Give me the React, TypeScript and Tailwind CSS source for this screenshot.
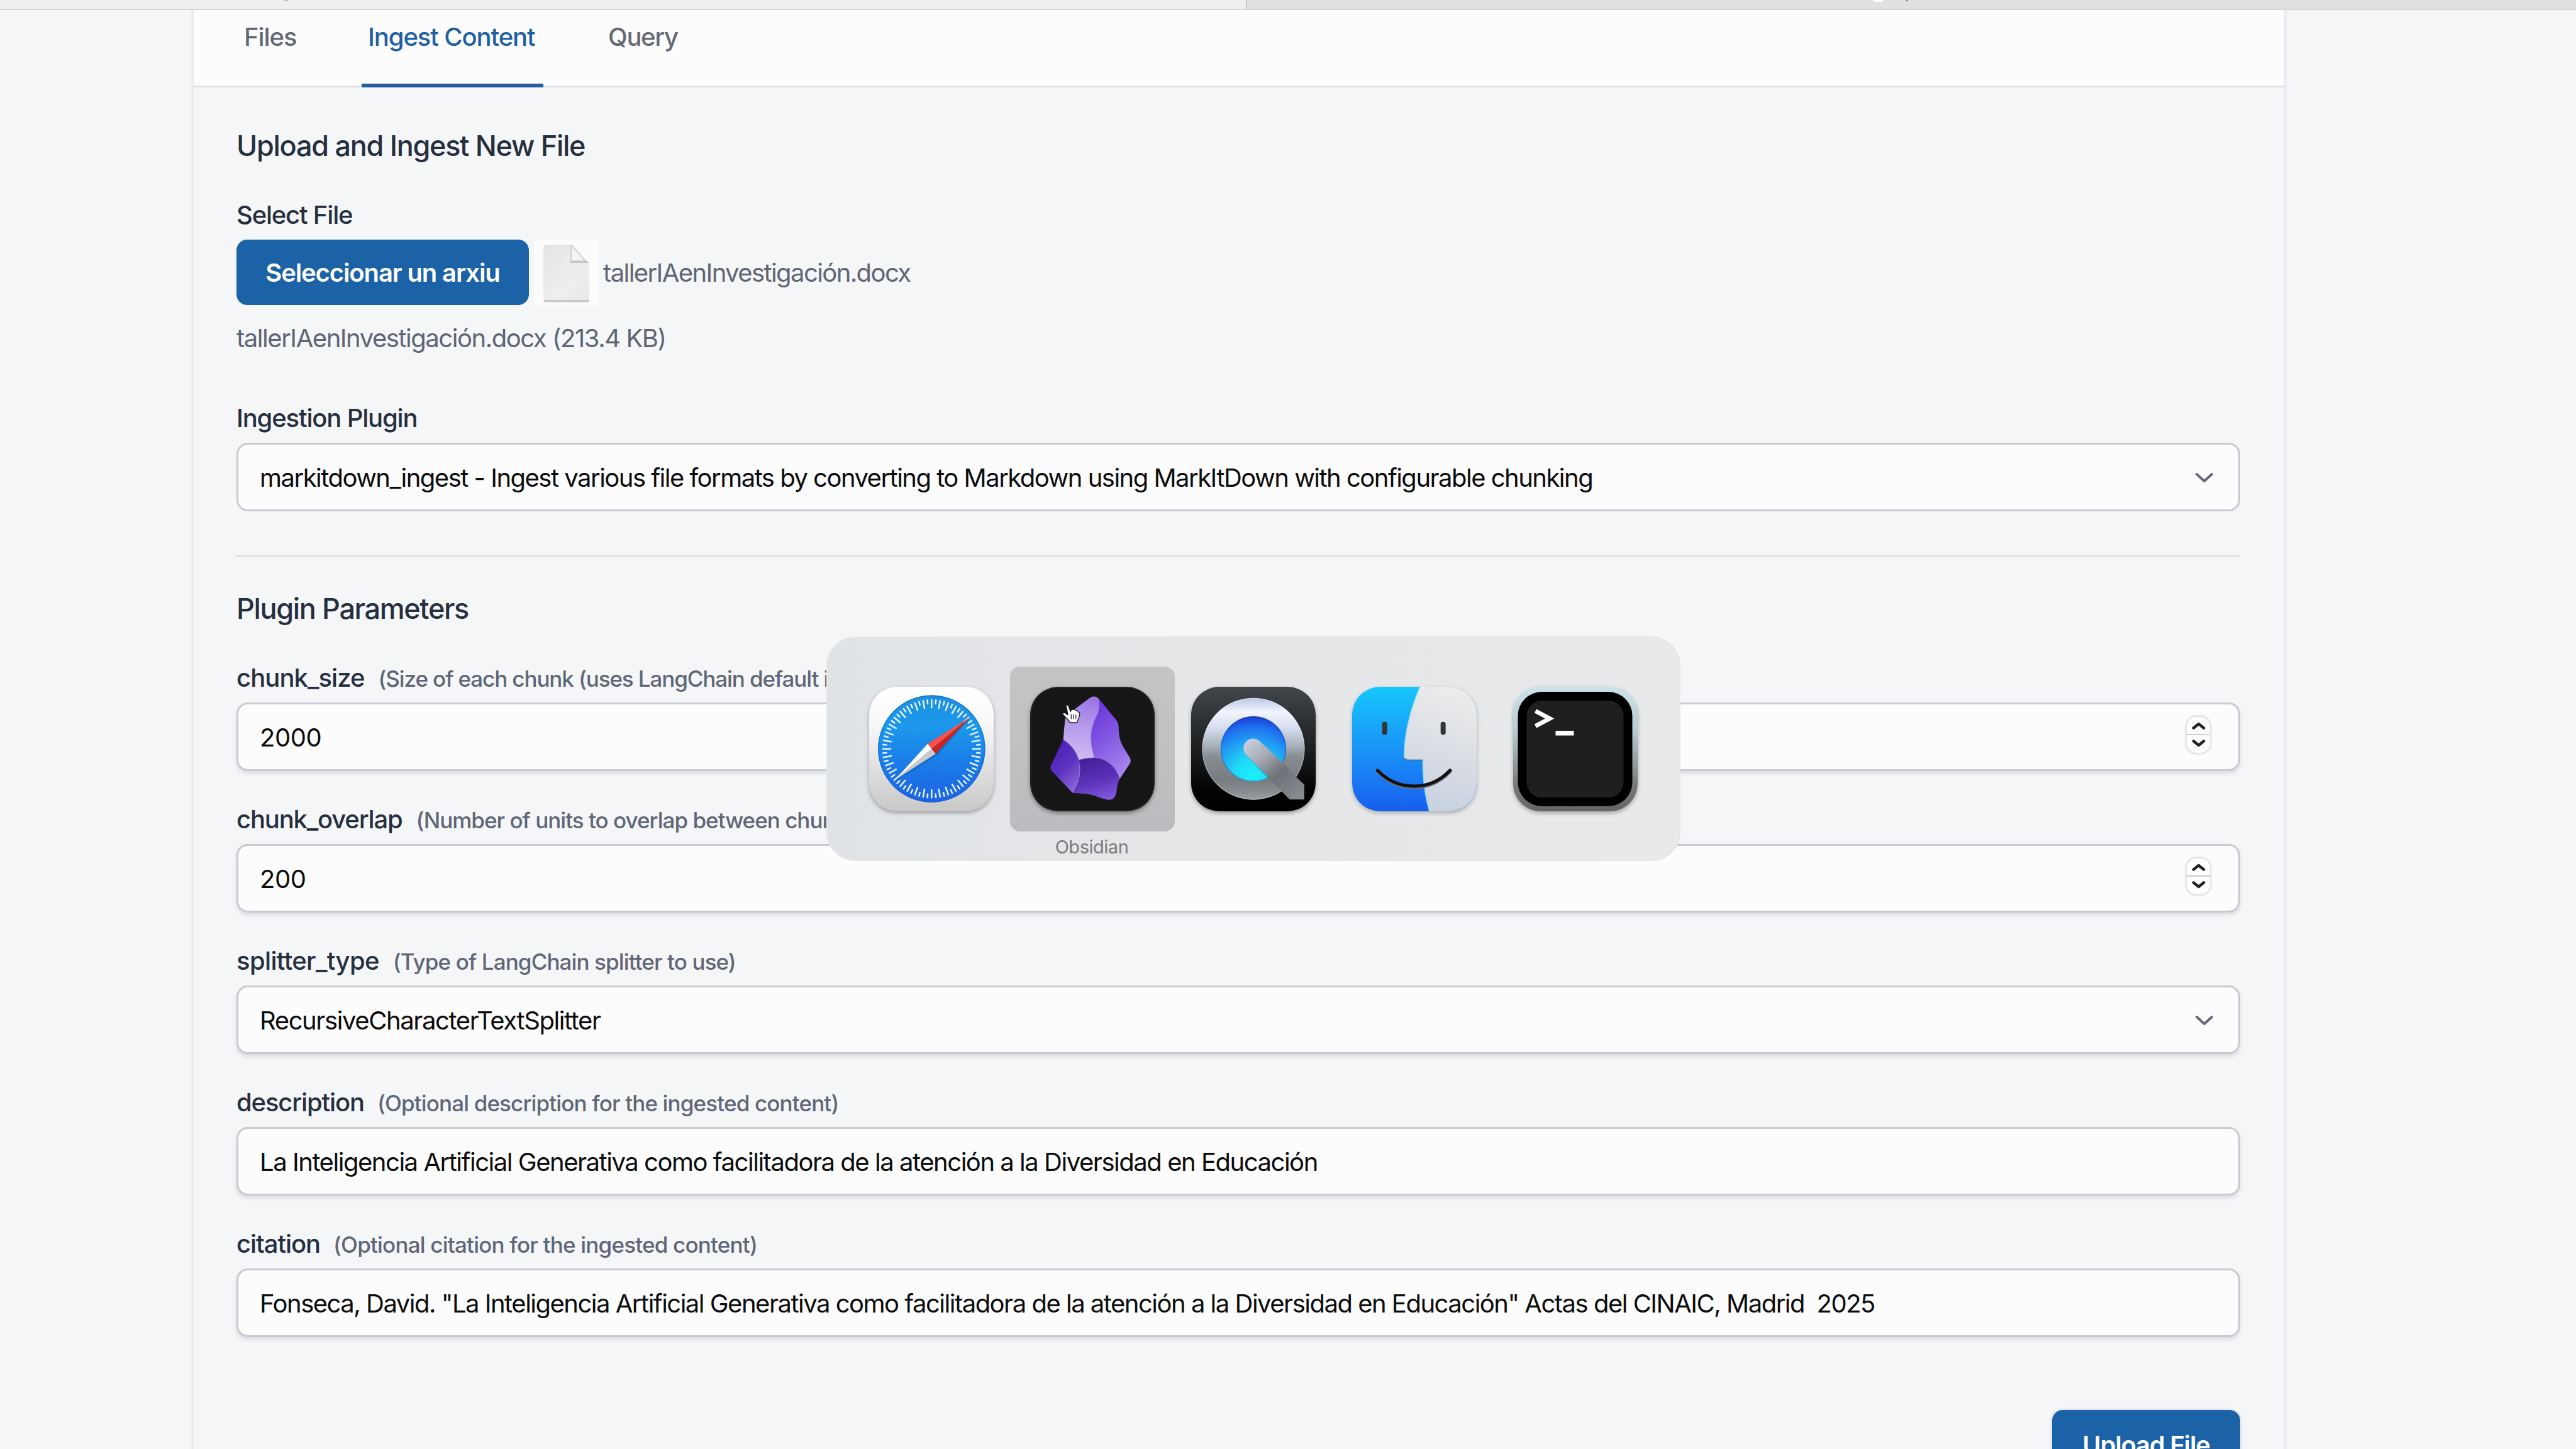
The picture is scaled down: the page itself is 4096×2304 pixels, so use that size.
import type { ReactNode } from "react";

function SafariIcon() {
  const ticks = Array.from({ length: 72 }, (_, i) => i);
  return (
    <svg viewBox="0 0 594 594" className="size-[198px] overflow-visible drop-shadow-[0_3px_3px_rgba(0,0,0,0.3)]">
      <defs>
        <linearGradient id="sf-bg" x1="0" y1="0" x2="0" y2="1">
          <stop offset="0" stopColor="#ffffff" />
          <stop offset="0.3" stopColor="#f8f8f8" />
          <stop offset="1" stopColor="#c8c8c8" />
        </linearGradient>
        <linearGradient id="sf-dial" x1="0" y1="0" x2="0" y2="1">
          <stop offset="0" stopColor="#1d8fe0" />
          <stop offset="0.3" stopColor="#1c98ec" />
          <stop offset="0.65" stopColor="#1b7be8" />
          <stop offset="1" stopColor="#1e62e4" />
        </linearGradient>
      </defs>
      <rect width="594" height="594" rx="134" fill="url(#sf-bg)" />
      <circle cx="298" cy="296" r="256" fill="url(#sf-dial)" />
      <circle cx="298" cy="296" r="253" fill="none" stroke="#1263b8" strokeOpacity="0.45" strokeWidth="5" />
      <g stroke="#e4f3ff" strokeWidth="7.5" strokeLinecap="round">
        {ticks.map((i) => (
          <line key={i} x1="298" y1="63" x2="298" y2={i % 2 === 0 ? 100 : 80} transform={`rotate(${i * 5} 298 296)`} />
        ))}
      </g>
      <path d="M483 148 L324 328 L121 452 Z" fill="#0b3f8f" opacity="0.35" />
      <path d="M483 144 L279 272 L298 296 Z" fill="#fb5147" />
      <path d="M483 144 L298 296 L317 320 Z" fill="#c9251f" />
      <path d="M121 446 L279 272 L298 296 Z" fill="#ffffff" />
      <path d="M121 446 L298 296 L317 320 Z" fill="#c9cacb" />
    </svg>
  );
}

function ObsidianIcon() {
  return (
    <svg viewBox="805 36 594 594" className="size-[198px] overflow-visible drop-shadow-[0_3px_3px_rgba(0,0,0,0.4)]">
      <defs>
        <linearGradient id="ob-light" x1="0.6" y1="0" x2="0.5" y2="1">
          <stop offset="0" stopColor="#9a74e6" />
          <stop offset="0.5" stopColor="#b69cec" />
          <stop offset="1" stopColor="#cfbcf4" />
        </linearGradient>
        <linearGradient id="ob-right" x1="0.3" y1="0" x2="0.7" y2="1">
          <stop offset="0" stopColor="#6a36dc" />
          <stop offset="0.45" stopColor="#8256e2" />
          <stop offset="1" stopColor="#a888ee" />
        </linearGradient>
        <linearGradient id="ob-bottom" x1="0.4" y1="0" x2="0.7" y2="1">
          <stop offset="0" stopColor="#43209a" />
          <stop offset="0.5" stopColor="#5a30b8" />
          <stop offset="1" stopColor="#8258dc" />
        </linearGradient>
        <linearGradient id="ob-left" x1="0.3" y1="0" x2="0.8" y2="1">
          <stop offset="0" stopColor="#4c1cb8" />
          <stop offset="0.5" stopColor="#5d33c0" />
          <stop offset="1" stopColor="#9068dc" />
        </linearGradient>
      </defs>
      <rect x="805" y="36" width="594" height="594" rx="134" fill="#161616" />
      <rect x="808" y="39" width="588" height="588" rx="131" fill="none" stroke="#303030" strokeWidth="3" />
      <path d="M1085 92 Q1108 72 1130 90 Q1142 110 1130 160 C1090 230 1085 290 1112 374 Q1070 375 1037 385 Q1020 325 963 288 L971 195 Q972 180 985 167 Z" fill="url(#ob-light)" />
      <path d="M1130 90 L1218 198 Q1228 212 1228 250 Q1230 290 1250 325 L1281 375 Q1288 390 1281 402 L1233 475 Q1200 380 1112 374 C1085 290 1090 230 1130 160 Q1140 130 1130 90 Z" fill="url(#ob-right)" />
      <path d="M1037 385 Q1070 375 1112 374 Q1200 380 1233 475 Q1222 490 1218 530 Q1212 580 1175 575 Q1150 570 1110 555 Q1080 545 1007 542 Q1060 480 1037 385 Z" fill="url(#ob-bottom)" />
      <path d="M963 288 Q1020 325 1037 385 Q1060 470 1007 542 L908 437 Q900 428 903 413 Z" fill="url(#ob-left)" />
      <path d="M963 288 Q1020 325 1037 385 Q1070 375 1112 374 Q1200 380 1233 475 M1037 385 Q1056 470 1007 542 M1130 160 C1090 230 1085 290 1112 374" fill="none" stroke="#b79cf4" strokeOpacity="0.5" strokeWidth="3" />
      <path
        d="M976 123 Q984 119 989 130 L998 155 Q1000 142 1011 145 Q1018 141 1023 149 Q1032 147 1034 157 Q1043 157 1041 168 L1036 188 Q1030 196 1029 207 L996 207 Q984 190 963 170 Q957 160 968 159 L985 170 Z"
        fill="#ffffff"
        stroke="#1a1a1a"
        strokeWidth="4"
        strokeLinejoin="round"
      />
      <path d="M1001 168 V190 M1012 168 V190 M1023 168 V190" stroke="#333333" strokeWidth="4" />
    </svg>
  );
}

function QuickTimeIcon() {
  return (
    <svg viewBox="30 36 590 594" preserveAspectRatio="none" className="size-[198px] overflow-visible drop-shadow-[0_3px_3px_rgba(0,0,0,0.35)]">
      <defs>
        <linearGradient id="qt-bg" x1="0" y1="0" x2="0" y2="1">
          <stop offset="0" stopColor="#42474b" />
          <stop offset="0.5" stopColor="#1c1e20" />
          <stop offset="0.85" stopColor="#020202" />
          <stop offset="1" stopColor="#000000" />
        </linearGradient>
        <linearGradient id="qt-ring" x1="0" y1="0" x2="0" y2="1">
          <stop offset="0" stopColor="#b9c6e4" />
          <stop offset="0.14" stopColor="#f2f5fe" />
          <stop offset="0.3" stopColor="#d3dcef" />
          <stop offset="0.44" stopColor="#b0b8c2" />
          <stop offset="0.58" stopColor="#868d94" />
          <stop offset="0.8" stopColor="#787c80" />
          <stop offset="0.92" stopColor="#878d90" />
          <stop offset="1" stopColor="#9aa1a4" />
        </linearGradient>
        <radialGradient id="qt-lens" gradientUnits="userSpaceOnUse" cx="325" cy="475" r="310">
          <stop offset="0" stopColor="#1cf0fb" />
          <stop offset="0.3" stopColor="#1fdcf8" />
          <stop offset="0.55" stopColor="#22a8f4" />
          <stop offset="0.8" stopColor="#1f70f0" />
          <stop offset="0.93" stopColor="#1c48d8" />
          <stop offset="1" stopColor="#1420a8" />
        </radialGradient>
        <linearGradient id="qt-rod" gradientUnits="userSpaceOnUse" x1="300" y1="290" x2="540" y2="560">
          <stop offset="0" stopColor="#c9d0de" />
          <stop offset="0.3" stopColor="#a4a9b2" />
          <stop offset="0.6" stopColor="#6f7177" />
          <stop offset="1" stopColor="#868c90" />
        </linearGradient>
      </defs>
      <rect x="30" y="36" width="590" height="594" rx="134" fill="url(#qt-bg)" />
      <circle cx="325" cy="332" r="243" fill="url(#qt-ring)" />
      <circle cx="325" cy="332" r="241" fill="none" stroke="#ffffff" strokeOpacity="0.3" strokeWidth="4" />
      <circle cx="325" cy="332" r="155" fill="url(#qt-lens)" />
      <circle cx="325" cy="332" r="153" fill="none" stroke="#10308a" strokeOpacity="0.3" strokeWidth="5" />
      <path d="M278 336 Q280 352 294 366 L392 472 L408 462 Z" fill="#0a5a9a" opacity="0.35" />
      <path d="M290 361 A46 46 0 0 1 355 296 L466 400 L526 465 L566 503 V574 H497 L458 535 L400 470 Z" fill="url(#qt-rod)" />
    </svg>
  );
}

function FinderIcon() {
  return (
    <svg viewBox="798 36 594 594" className="size-[198px] overflow-visible drop-shadow-[0_3px_3px_rgba(0,0,0,0.25)]">
      <defs>
        <linearGradient id="fd-blue" x1="0" y1="0" x2="0" y2="1">
          <stop offset="0" stopColor="#17c6fc" />
          <stop offset="0.5" stopColor="#1994f6" />
          <stop offset="1" stopColor="#185eee" />
        </linearGradient>
        <linearGradient id="fd-face" x1="0.6" y1="0" x2="0.4" y2="1">
          <stop offset="0" stopColor="#ececec" />
          <stop offset="0.5" stopColor="#dadee4" />
          <stop offset="1" stopColor="#c6d1e0" />
        </linearGradient>
        <clipPath id="fd-clip">
          <rect x="798" y="36" width="594" height="594" rx="134" />
        </clipPath>
      </defs>
      <g clipPath="url(#fd-clip)">
        <rect x="798" y="36" width="594" height="594" fill="url(#fd-blue)" />
        <path d="M1122 34 C1072 150 1046 270 1046 366 Q1046 385 1065 385 H1135 Q1134 520 1167 632 H1394 V34 Z" fill="url(#fd-face)" />
        <path d="M1122 34 C1072 150 1046 270 1046 366 M1135 390 Q1134 520 1167 632" fill="none" stroke="#7fe0ff" strokeWidth="4" />
        <path d="M1050 378 Q1054 385 1065 385 H1135" fill="none" stroke="#4a5a70" strokeWidth="4" />
      </g>
      <rect x="941" y="203" width="24" height="62" rx="11" fill="#333638" />
      <rect x="1220" y="203" width="24" height="62" rx="11" fill="#333638" />
      <path d="M919 437 Q992 514 1092 514 Q1194 514 1265 437" fill="none" stroke="#6d7078" strokeWidth="20" strokeLinecap="round" />
      <path d="M919 435 Q992 510 1092 510 Q1194 510 1265 435" fill="none" stroke="#101214" strokeWidth="15" strokeLinecap="round" />
    </svg>
  );
}

function TerminalIcon() {
  return (
    <svg viewBox="0 0 198 198" className="size-[198px] overflow-visible drop-shadow-[0_3px_3px_rgba(0,0,0,0.3)]">
      <defs>
        <linearGradient id="tm-rim" x1="0" y1="0" x2="0" y2="1">
          <stop offset="0" stopColor="#cbe2e8" />
          <stop offset="0.35" stopColor="#b6ccd2" />
          <stop offset="0.8" stopColor="#777879" />
          <stop offset="1" stopColor="#646464" />
        </linearGradient>
      </defs>
      <rect width="198" height="198" rx="44" fill="url(#tm-rim)" />
      <rect x="7.5" y="8" width="182" height="182" rx="38" fill="#000000" />
      <rect x="21.5" y="22" width="154" height="154" rx="24" fill="#1f1f1f" />
      <path d="M35.5 38.5 L58 50.5 L35.5 62.5" fill="none" stroke="#ffffff" strokeWidth="7" />
      <rect x="67.5" y="70" width="29" height="7.5" fill="#ffffff" />
    </svg>
  );
}

function DocumentIcon() {
  return (
    <svg viewBox="0 0 103 104" className="h-[104px] w-[103px]">
      <defs>
        <linearGradient id="doc" x1="0" y1="0" x2="1" y2="1">
          <stop offset="0" stopColor="#e4e4e4" />
          <stop offset="0.6" stopColor="#eeeeee" />
          <stop offset="1" stopColor="#e8e8e8" />
        </linearGradient>
      </defs>
      <path d="M18 97 H85" stroke="#c8c8c8" strokeWidth="5" strokeLinecap="round" />
      <path d="M19 8 H59 L88 37 V93 Q88 96 85 96 H18 Q15 96 15 93 V12 Q15 8 19 8 Z" fill="url(#doc)" />
      <path d="M59 34 H86 V37 H57 Z" fill="#c4c4c4" />
      <path d="M59 9 Q60 8 62 11 L80 32 Q82 34 79 34 H62 Q59 34 59 31 Z" fill="#f4f4f4" stroke="#c9c9c9" strokeWidth="1.5" />
    </svg>
  );
}

function Chevron() {
  return (
    <svg viewBox="0 0 28 18" className="mt-[2px] mr-[40px] h-[18px] w-[28px]">
      <path d="M2 3 L14 14 L26 3" fill="none" stroke="#656a78" strokeWidth="4" strokeLinecap="round" strokeLinejoin="round" />
    </svg>
  );
}

function Spinner() {
  return (
    <div className="mr-[43px] mb-[7px] flex h-[61px] w-[41px] flex-col rounded-[17px] border-2 border-[#e3e3e4] bg-[#fdfdfd] shadow-[0_0_3px_rgba(0,0,0,0.12)]">
      <div className="flex flex-1 items-center justify-center border-b-2 border-[#cfcfcf]">
        <svg viewBox="0 0 22 14" className="mt-[2px] h-[14px] w-[22px]">
          <path d="M3 10.5 L11 4 L19 10.5" fill="none" stroke="#222222" strokeWidth="4.5" strokeLinecap="round" strokeLinejoin="round" />
        </svg>
      </div>
      <div className="flex flex-1 items-center justify-center">
        <svg viewBox="0 0 22 14" className="mb-[2px] h-[14px] w-[22px]">
          <path d="M3 3.5 L11 10 L19 3.5" fill="none" stroke="#222222" strokeWidth="4.5" strokeLinecap="round" strokeLinejoin="round" />
        </svg>
      </div>
    </div>
  );
}

function Field({ children, end, flat }: { children: ReactNode; end?: ReactNode; flat?: boolean }) {
  return (
    <div
      className={
        "flex h-[109px] items-center justify-between rounded-[18px] border-3 border-[#c8ccd2] bg-[#fcfcfd] pl-[34px] text-[40px] text-[#0c0c0c] " +
        (flat ? "" : "shadow-[0_4px_6px_rgba(60,70,90,0.14)]")
      }
    >
      <div className="pt-[2px]">{children}</div>
      {end}
    </div>
  );
}

function Param({ label, hint, children }: { label: ReactNode; hint: ReactNode; children: ReactNode }) {
  return (
    <div className="flex flex-col gap-[16px]">
      <div className="flex h-[48px] items-baseline text-[40px] leading-[50px] font-medium text-[#262f3e]">
        {label}
        <span className="text-[35px] text-[#5f6776]">{hint}</span>
      </div>
      {children}
    </div>
  );
}

function AppSwitcher() {
  return (
    <div className="absolute top-[1012px] left-[1314px] flex h-[357px] w-[1358px] rounded-[46px] border-2 border-[#e4e6e8] bg-linear-to-r from-[#e0e3e6] via-[#e6e7e9] to-[#e8e9ea] pt-[46px] pl-[37px]">
      <div className="flex w-[256px] justify-center pt-[32px]">
        <SafariIcon />
      </div>
      <div className="flex w-[256px] flex-col items-center">
        <div className="flex h-[262px] w-[262px] shrink-0 justify-center rounded-[16px] bg-linear-to-b from-[#c4c4c4] to-[#bbbcbf] pt-[32px]">
          <ObsidianIcon />
        </div>
        <span className="mt-[7px] mr-[2px] text-[29px] leading-[36px] tracking-[-0.475px] text-[#7b7c7f]">Obsidian</span>
      </div>
      <div className="flex w-[256px] justify-center pt-[32px]">
        <QuickTimeIcon />
      </div>
      <div className="flex w-[256px] justify-center pt-[32px]">
        <FinderIcon />
      </div>
      <div className="flex w-[256px] justify-center pt-[32px]">
        <TerminalIcon />
      </div>
    </div>
  );
}

export default function App() {
  return (
    <div className="relative flex h-[2304px] w-[4096px] flex-col overflow-hidden bg-[#f5f6f8] font-['Inter',sans-serif] whitespace-pre">
      <div className="flex h-[16px] shrink-0 border-b-2 border-[#d4d4d5] bg-[#e0e0e0]">
        <div className="flex w-[1983px] justify-start border-r-2 border-[#c9c9c9] bg-[#efefef]">
          <div className="ml-[451px] h-[2px] w-[8px] rounded-b-full bg-[#c4c4c4]" />
        </div>
        <div className="ml-[995px] h-[3px] w-[17px] rounded-b-full bg-white" />
        <div className="ml-[35px] h-[2px] w-[4px] bg-[#b98a5c]" />
      </div>

      <div className="mr-[461px] ml-[305px] flex flex-1 flex-col border-x-3 border-[#e8ebef] shadow-[0_0_3px_rgba(210,220,230,0.6)]">
        <nav className="flex h-[123px] shrink-0 border-b-3 border-[#dfe3e8] bg-[#fcfcfd] text-[40px] leading-[48px] font-medium text-[#646a75]">
          <div className="ml-[68px] h-[123px] w-[103px] pt-[19px] pl-[12px] tracking-[-1.057px]">Files</div>
          <div className="ml-[96px] h-[123px] w-[289px] border-b-6 border-[#285d9d] pt-[19px] pl-[10px] tracking-[-1.108px] text-[#1f60a3]">
            Ingest Content
          </div>
          <div className="ml-[92px] h-[123px] pt-[19px] pl-[11px] tracking-[-1.349px]">Query</div>
        </nav>

        <div className="flex flex-col pr-[70px] pl-[68px]">
          <h2 className="mt-[65px] h-[56px] text-[45px] leading-[56px] font-medium tracking-[-1.293px] text-[#262f3e]">
            Upload and Ingest New File
          </h2>
          <div className="mt-[58px] h-[47px] text-[40px] leading-[48px] font-medium tracking-[-1.2px] text-[#262f3e]">Select File</div>
          <div className="mt-[16px] flex h-[104px] items-center">
            <button className="h-[104px] w-[465px] rounded-[17px] bg-[#1c62a7] pt-[1px] text-center text-[40px] font-semibold tracking-[-1.124px] text-white">
              Seleccionar un arxiu
            </button>
            <div className="ml-[8px] bg-[#fcfcfc]">
              <DocumentIcon />
            </div>
            <span className="ml-[7px] pt-[2px] text-[40px] leading-[48px] tracking-[-1.59px] text-[#5f6673]">tallerIAenInvestigación.docx</span>
          </div>
          <div className="mt-[29px] h-[48px] text-[40px] leading-[48px] tracking-[-1.46px] text-[#5f6673]">
            tallerIAenInvestigación.docx (213.4 KB)
          </div>

          <div className="mt-[79px] mb-[15px] h-[48px] text-[40px] leading-[48px] font-medium tracking-[-1.169px] text-[#262f3e]">Ingestion Plugin</div>
          <Field flat end={<Chevron />}>
            <span className="tracking-[-1.515px]">
              markitdown_ingest - Ingest various file formats by converting to Markdown using MarkItDown with configurable chunking
            </span>
          </Field>
          <hr className="mt-[70px] border-t-3 border-[#dfe1e5]" />
          <h3 className="mt-[54px] mb-[57px] h-[56px] text-[45px] leading-[56px] font-medium tracking-[-1.354px] text-[#262f3e]">
            Plugin Parameters
          </h3>

          <div className="flex flex-col gap-[52px]">
            <Param
              label={<span className="tracking-[-0.941px]">chunk_size</span>}
              hint={<span className="ml-[22px] tracking-[-1.11px]">(Size of each chunk (uses LangChain default if not specified))</span>}
            >
              <Field end={<Spinner />}>
                <span className="tracking-[-0.454px]">2000</span>
              </Field>
            </Param>
            <Param
              label={<span className="tracking-[-1.18px]">chunk_overlap</span>}
              hint={<span className="ml-[22px] tracking-[-0.987px]">(Number of units to overlap between chunks)</span>}
            >
              <Field end={<Spinner />}>
                <span className="tracking-[-0.454px]">200</span>
              </Field>
            </Param>
            <Param
              label={<span className="tracking-[-0.65px]">splitter_type</span>}
              hint={<span className="ml-[22px] tracking-[-0.892px]">(Type of LangChain splitter to use)</span>}
            >
              <Field end={<Chevron />}>
                <span className="tracking-[-1.409px]">RecursiveCharacterTextSplitter</span>
              </Field>
            </Param>
            <Param
              label={<span className="tracking-[-1.148px]">description</span>}
              hint={<span className="ml-[21px] tracking-[-0.86px]">(Optional description for the ingested content)</span>}
            >
              <Field>
                <span className="tracking-[-1.465px]">
                  La Inteligencia Artificial Generativa como facilitadora de la atención a la Diversidad en Educación
                </span>
              </Field>
            </Param>
            <Param
              label={<span className="tracking-[-1.077px]">citation</span>}
              hint={<span className="ml-[21px] tracking-[-0.799px]">(Optional citation for the ingested content)</span>}
            >
              <Field>
                <span className="tracking-[-1.498px]">
                  {'Fonseca, David. "La Inteligencia Artificial Generativa como facilitadora de la atención a la Diversidad en Educación" Actas del CINAIC, Madrid  2025'}
                </span>
              </Field>
            </Param>
          </div>

          <button className="mt-[116px] h-[110px] w-[299px] self-end rounded-[17px] bg-[#1c62a7] pt-[2px] text-center text-[40px] font-semibold tracking-[-1.207px] text-white shadow-[0_0_5px_rgba(40,90,150,0.25)]">
            Upload File
          </button>
        </div>
      </div>

      <AppSwitcher />
    </div>
  );
}
